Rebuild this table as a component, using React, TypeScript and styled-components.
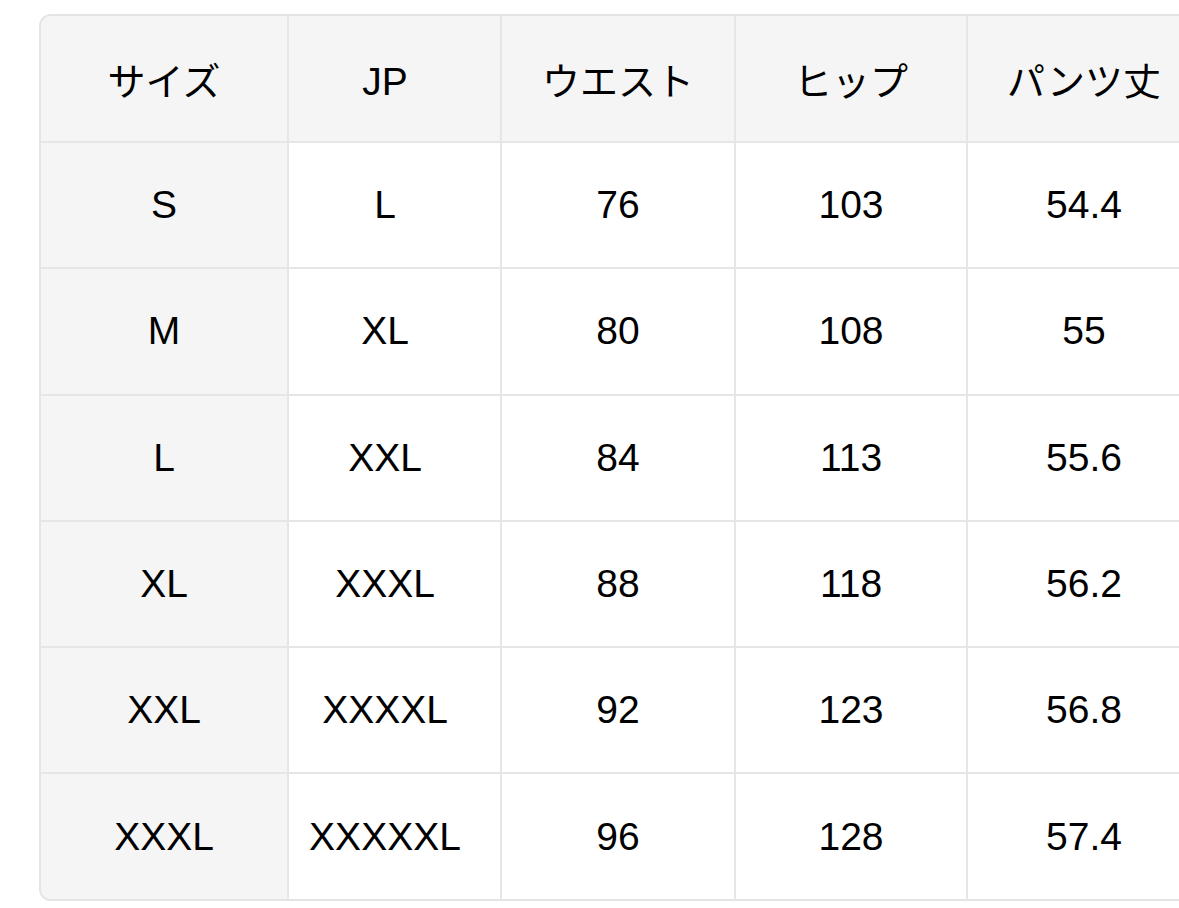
import React from "react";
import styled, { createGlobalStyle } from "styled-components";

const GlobalStyle = createGlobalStyle`
  html, body {
    margin: 0;
    padding: 0;
    background: #fff;
    overflow: hidden;
  }
  body {
    font-family: "Liberation Sans", "Noto Sans CJK JP", sans-serif;
    color: #000;
  }
`;

const Page = styled.div`
  padding: 14px 0 0 39px;
`;

const Frame = styled.div`
  width: 1138px;
  overflow: hidden;
  border: 2px solid #e4e4e4;
  border-right: none;
  border-radius: 12px 0 0 12px;
`;

const Table = styled.table`
  border-collapse: separate;
  border-spacing: 0;
  table-layout: fixed;
  width: 1161px;
`;

const Cell = styled.td<{ $shaded?: boolean; $last?: boolean; $nudge?: number }>`
  height: 124.3px;
  padding: 0 ${({ $nudge }) => $nudge ?? 0}px 0 0;
  text-align: center;
  vertical-align: middle;
  font-size: 39px;
  font-weight: 400;
  background: ${({ $shaded }) => ($shaded ? "#f5f5f5" : "#fff")};
  border-right: 2px solid #e6e6e6;
  border-bottom: ${({ $last }) => ($last ? "none" : "2px solid #e6e6e6")};
`;

const HeadCell = styled(Cell).attrs({ as: "th" })`
  height: 125px;
  background: #f5f5f5;
  font-family: "Noto Sans CJK JP", "Liberation Sans", sans-serif;
  font-weight: 400;
  font-size: 38px;
`;

const Latin = styled.span`
  font-family: "Liberation Sans", sans-serif;
  font-weight: 400;
  font-size: 39px;
`;

const widths = [248, 213, 234, 232, 234];
// the JP column sits a little left of its centre in the original
const nudges = [0, 19, 0, 0, 0];
const headers = ["サイズ", "JP", "ウエスト", "ヒップ", "パンツ丈"];
const rows = [
  ["S", "L", "76", "103", "54.4"],
  ["M", "XL", "80", "108", "55"],
  ["L", "XXL", "84", "113", "55.6"],
  ["XL", "XXXL", "88", "118", "56.2"],
  ["XXL", "XXXXL", "92", "123", "56.8"],
  ["XXXL", "XXXXXL", "96", "128", "57.4"],
];

const App: React.FC = () => (
  <Page>
    <GlobalStyle />
    <Frame>
      <Table>
        <colgroup>
          {widths.map((w, i) => (
            <col key={i} style={{ width: w }} />
          ))}
        </colgroup>
        <thead>
          <tr>
            {headers.map((h, ci) => (
              <HeadCell key={h} $nudge={nudges[ci]}>
                {h === "JP" ? <Latin>{h}</Latin> : h}
              </HeadCell>
            ))}
          </tr>
        </thead>
        <tbody>
          {rows.map((r, ri) => (
            <tr key={r[0]}>
              {r.map((v, ci) => (
                <Cell
                  key={ci}
                  $shaded={ci === 0}
                  $last={ri === rows.length - 1}
                  $nudge={nudges[ci]}
                >
                  {v}
                </Cell>
              ))}
            </tr>
          ))}
        </tbody>
      </Table>
    </Frame>
  </Page>
);

export default App;
